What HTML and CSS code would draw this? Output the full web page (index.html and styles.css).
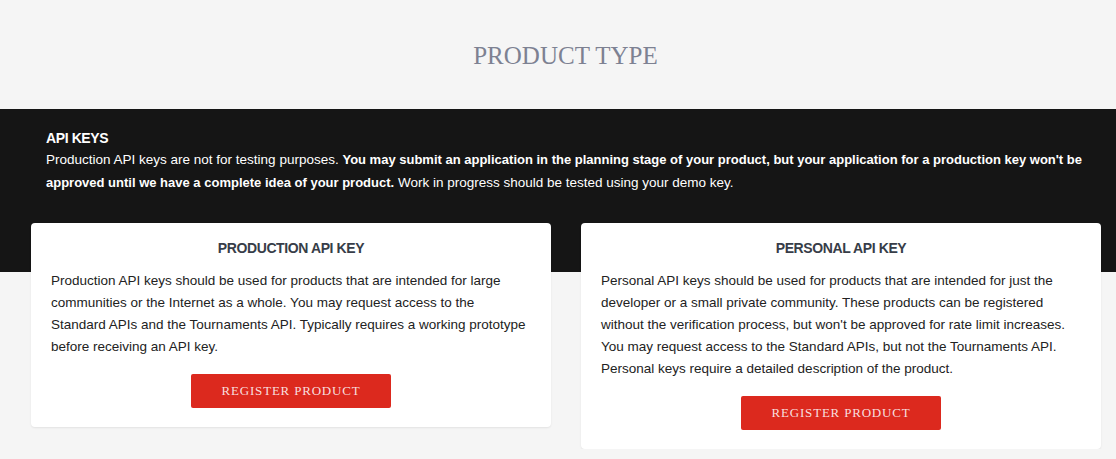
FILE: index.html
```html
<!DOCTYPE html>
<html>
<head>
<meta charset="utf-8">
<link rel="stylesheet" href="styles.css">
</head>
<body>
<div class="page">
  <h1 class="page-title">PRODUCT TYPE</h1>
  <section class="intro">
    <h2 class="intro-title">API KEYS</h2>
    <p class="intro-text">Production API keys are not for testing purposes. <strong>You may submit an application in the planning stage of your product, but your application for a production key won't be</strong> <strong>approved until we have a complete idea of your product.</strong> Work in progress should be tested using your demo key.</p>
  </section>
  <div class="cards">
    <div class="col">
      <div class="card">
        <h3 class="card-title">PRODUCTION API KEY</h3>
        <p class="card-text">Production API keys should be used for products that are intended for large communities or the Internet as a whole. You may request access to the Standard APIs and the Tournaments API. Typically requires a working prototype before receiving an API key.</p>
        <div class="card-actions"><button class="btn">REGISTER PRODUCT</button></div>
      </div>
    </div>
    <div class="col">
      <div class="card">
        <h3 class="card-title">PERSONAL API KEY</h3>
        <p class="card-text">Personal API keys should be used for products that are intended for just the developer or a small private community. These products can be registered without the verification process, but won't be approved for rate limit increases. You may request access to the Standard APIs, but not the Tournaments API. Personal keys require a detailed description of the product.</p>
        <div class="card-actions"><button class="btn">REGISTER PRODUCT</button></div>
      </div>
    </div>
  </div>
</div>
</body>
</html>
```
FILE: styles.css
```css
html, body {
  margin: 0;
  padding: 0;
  background: #f5f5f5;
}
body {
  font-family: "Liberation Sans", Arial, sans-serif;
  color: #222;
}
.page {
  width: 1116px;
}
.page-title {
  margin: 0;
  padding: 41px 0 0 15px;
  height: 68px;
  box-sizing: border-box;
  text-align: center;
  font-family: "Liberation Serif", serif;
  font-weight: normal;
  font-size: 25px;
  letter-spacing: 0;
  color: #7d8192;
  line-height: 30px;
}
.intro {
  background: #151515;
  color: #fff;
  padding: 20px 31px 0 46px;
  height: 163px;
  box-sizing: border-box;
  margin-top: 41px;
}
.intro-title {
  margin: 0;
  font-size: 14px;
  font-weight: bold;
  letter-spacing: -0.4px;
  line-height: 18px;
}
.intro-text {
  margin: 1px 0 0;
  font-size: 13.5px;
  line-height: 23px;
}
.intro-text strong {
  font-weight: bold;
  font-size: 13px;
}
.cards {
  display: flex;
  padding-left: 16px;
  margin-top: -49px;
  align-items: flex-start;
}
.col {
  width: 550px;
  padding: 0 15px;
  box-sizing: border-box;
}
.card {
  background: #fff;
  border-radius: 4px;
  box-shadow: 0 1px 2px rgba(0,0,0,0.08);
  padding: 16px 20px 19px;
}
.card-title {
  margin: 0;
  text-align: center;
  font-size: 14px;
  font-weight: bold;
  letter-spacing: -0.4px;
  color: #373d48;
  line-height: 18px;
}
.card-text {
  margin: 13px 0 0;
  font-size: 13.5px;
  line-height: 22px;
  color: #222;
}
.card-actions {
  display: flex;
  justify-content: center;
  margin-top: 16px;
}
.btn {
  width: 200px;
  height: 34px;
  border: none;
  border-radius: 2px;
  background: #dc291e;
  color: #f7dede;
  font-family: "Liberation Serif", serif;
  font-size: 13px;
  letter-spacing: 0.8px;
  cursor: pointer;
}
```
